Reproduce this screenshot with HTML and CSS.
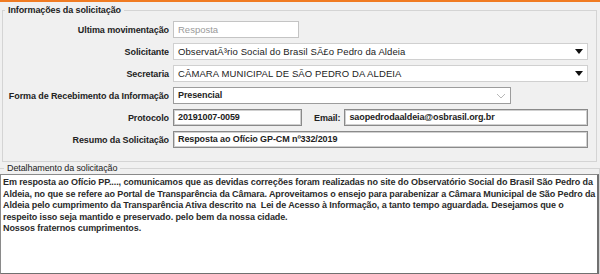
FILE: index.html
```html
<!DOCTYPE html>
<html lang="pt-BR">
<head>
  <meta charset="UTF-8" />
  <title>Solicitação</title>
  <link rel="stylesheet" href="styles.css">
</head>
<body>
  <div class="top-bar"></div>

  <!-- Informações -->
  <fieldset class="info">
    <legend>Informações da solicitação</legend>

    <div class="row">
      <label class="lbl">Ultima movimentação</label>
      <div class="field field-disabled w-short">Resposta</div>
    </div>

    <div class="row">
      <label class="lbl">Solicitante</label>
      <div class="field field-select grow">
        <span>ObservatÃ³rio Social do Brasil SÃ£o Pedro da Aldeia</span>
        <span class="arrow"></span>
      </div>
    </div>

    <div class="row">
      <label class="lbl">Secretaria</label>
      <div class="field field-select grow">
        <span>CÂMARA MUNICIPAL DE SÃO PEDRO DA ALDEIA</span>
        <span class="arrow"></span>
      </div>
    </div>

    <div class="row">
      <label class="lbl">Forma de Recebimento da Informação</label>
      <div class="field field-combo w-combo">
        <span class="bold">Presencial</span>
        <svg class="chevron" width="10" height="6" viewBox="0 0 10 6"><polyline points="1,1 5,5 9,1" fill="none" stroke="#b8b8b8" stroke-width="1"/></svg>
      </div>
    </div>

    <div class="row">
      <label class="lbl">Protocolo</label>
      <div class="field field-input w-proto bold">20191007-0059</div>
      <label class="lbl-email">Email:</label>
      <div class="field field-input grow bold">saopedrodaaldeia@osbrasil.org.br</div>
    </div>

    <div class="row">
      <label class="lbl">Resumo da Solicitação</label>
      <div class="field field-input grow bold">Resposta ao Ofício GP-CM nº332/2019</div>
    </div>
  </fieldset>

  <!-- Detalhamento -->
  <fieldset class="detail">
    <legend>Detalhamento da solicitação</legend>
    <div class="text-box">
      <p>Em resposta ao Ofício PP...., comunicamos que as devidas correções foram realizadas no site do Observatório Social do Brasil São Pedro da</p>
      <p>Aldeia, no que se refere ao Portal de Transparência da Câmara. Aproveitamos o ensejo para parabenizar a Câmara Municipal de São Pedro da</p>
      <p>Aldeia pelo cumprimento da Transparência Ativa descrito na&nbsp; Lei de Acesso à Informação, a tanto tempo aguardada. Desejamos que o</p>
      <p>respeito isso seja mantido e preservado. pelo bem da nossa cidade.</p>
      <p>Nossos fraternos cumprimentos.</p>
    </div>
  </fieldset>
</body>
</html>
```

FILE: styles.css
```css
* {
  box-sizing: border-box;
  margin: 0;
  padding: 0;
}

body {
  font-family: 'Liberation Sans', Arial, sans-serif;
  font-size: 9px;
  letter-spacing: -0.1px;
  color: #222;
  background: #f0f0f0;
  width: 600px;
  height: 274px;
  overflow: hidden;
}

.top-bar {
  height: 2px;
  background: #f07b22;
}

/* Fieldsets */
fieldset {
  border: 1px solid #d4d4d4;
}

legend {
  font-size: 9px;
  height: 12px;
  line-height: 12px;
  padding: 0 3px;
  margin-left: 2px;
}

.info {
  margin: 2px 3px 0 2px;
  padding: 5px 8px 13px 0;
}

.info legend {
  font-weight: bold;
}

.row {
  display: flex;
  align-items: center;
  gap: 4px;
  height: 17px;
  margin-bottom: 5px;
}

.row:last-child {
  margin-bottom: 0;
}

.lbl {
  width: 166px;
  text-align: right;
  font-weight: bold;
  flex-shrink: 0;
  white-space: nowrap;
}

.lbl-email {
  font-weight: bold;
  margin-left: 8px;
  white-space: nowrap;
}

.field {
  height: 17px;
  line-height: 15px;
  padding: 0 4px;
  background: #fff;
  white-space: nowrap;
  overflow: hidden;
}

.bold {
  font-weight: bold;
}

.grow {
  flex: 1;
}

.w-short { width: 126px; }
.w-combo { width: 338px; }
.w-proto { width: 129px; }

.field-disabled {
  border: 1px solid #c4c4c4;
  color: #9a9a9a;
  font-size: 9.5px;
  letter-spacing: 0;
}

.field-select {
  border: 1px solid #d0d0d0;
  display: flex;
  justify-content: space-between;
  align-items: center;
  padding-right: 3px;
  font-size: 9.5px;
  letter-spacing: 0.1px;
}

.field-select .arrow {
  width: 0;
  height: 0;
  border-left: 4px solid transparent;
  border-right: 4px solid transparent;
  border-top: 5px solid #111;
  margin-right: 1px;
}

.field-combo {
  border: 1px solid #9c9c9c;
  display: flex;
  justify-content: space-between;
  align-items: center;
  padding-right: 4px;
}

.field-input {
  border: 1px solid #8a8a8a;
  box-shadow: inset 0 0 0 1px #d0d0d0;
}

/* Detail area */
.detail {
  margin: 0 1px 0 0;
  padding: 0;
  border-bottom: none;
  border-left: none;
}

.detail legend {
  margin-left: 4px;
}

.text-box {
  height: 101px;
  background: #fff;
  border: 1px solid #8a8a8a;
  border-right: 2px solid #707070;
  border-bottom: 2px solid #707070;
  padding: 2px 2px;
  font-weight: bold;
  line-height: 11.5px;
  color: #2a2a2a;
  white-space: nowrap;
}
```
